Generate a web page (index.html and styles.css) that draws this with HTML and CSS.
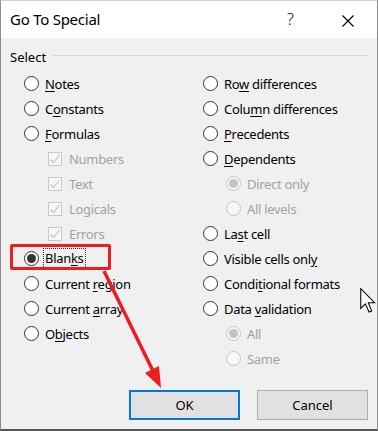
FILE: index.html
```html
<!DOCTYPE html>
<html lang="en">

<head>
    <meta charset="UTF-8">
    <meta name="viewport" content="width=device-width, initial-scale=1.0">
    <link rel="stylesheet" href="styles.css">
    <title>Go To Special</title>
</head>

<body>

    <div class="dialog">
        <div class="titlebar">
            <span class="title">Go To Special</span>
            <span class="help">?</span>
            <span class="close">
                <svg width="12" height="12" viewBox="0 0 12 12">
                    <path d="M0.5 0.5 L11.5 11.5 M11.5 0.5 L0.5 11.5" stroke="#000" stroke-width="1.1" fill="none"/>
                </svg>
            </span>
        </div>

        <div class="content">
            <div class="group-head">
                <span>Select</span>
                <span class="rule"></span>
            </div>

            <div class="options">
                <div class="col">
                    <div class="row"><span class="radio"></span><span><u>N</u>otes</span></div>
                    <div class="row"><span class="radio"></span><span>C<u>o</u>nstants</span></div>
                    <div class="row"><span class="radio"></span><span><u>F</u>ormulas</span></div>
                    <div class="row sub disabled"><span class="check"><svg width="12" height="12" viewBox="0 0 12 12"><path d="M1.5 6.5 L4.5 9.5 L10.5 2" stroke="#c4c4c4" stroke-width="1.2" fill="none"/></svg></span><span>Numbers</span></div>
                    <div class="row sub disabled"><span class="check"><svg width="12" height="12" viewBox="0 0 12 12"><path d="M1.5 6.5 L4.5 9.5 L10.5 2" stroke="#c4c4c4" stroke-width="1.2" fill="none"/></svg></span><span>Text</span></div>
                    <div class="row sub disabled"><span class="check"><svg width="12" height="12" viewBox="0 0 12 12"><path d="M1.5 6.5 L4.5 9.5 L10.5 2" stroke="#c4c4c4" stroke-width="1.2" fill="none"/></svg></span><span>Logicals</span></div>
                    <div class="row sub disabled"><span class="check"><svg width="12" height="12" viewBox="0 0 12 12"><path d="M1.5 6.5 L4.5 9.5 L10.5 2" stroke="#c4c4c4" stroke-width="1.2" fill="none"/></svg></span><span>Errors</span></div>
                    <div class="row marked">
                        <span class="highlight"></span>
                        <span class="radio checked"></span><span class="focus">Blan<u>k</u>s</span>
                    </div>
                    <div class="row"><span class="radio"></span><span>Current <u>r</u>egion</span></div>
                    <div class="row"><span class="radio"></span><span>Current <u>a</u>rray</span></div>
                    <div class="row"><span class="radio"></span><span>O<u>b</u>jects</span></div>
                </div>

                <div class="col">
                    <div class="row"><span class="radio"></span><span>Ro<u>w</u> differences</span></div>
                    <div class="row"><span class="radio"></span><span>Colu<u>m</u>n differences</span></div>
                    <div class="row"><span class="radio"></span><span><u>P</u>recedents</span></div>
                    <div class="row"><span class="radio"></span><span><u>D</u>ependents</span></div>
                    <div class="row indent disabled"><span class="radio checked"></span><span>Direct only</span></div>
                    <div class="row indent disabled"><span class="radio"></span><span>All levels</span></div>
                    <div class="row"><span class="radio"></span><span>La<u>s</u>t cell</span></div>
                    <div class="row"><span class="radio"></span><span>Visible cells onl<u>y</u></span></div>
                    <div class="row"><span class="radio"></span><span>Condi<u>t</u>ional formats</span></div>
                    <div class="row"><span class="radio"></span><span>Data <u>v</u>alidation</span></div>
                    <div class="row indent disabled"><span class="radio checked"></span><span>All</span></div>
                    <div class="row indent disabled"><span class="radio"></span><span>Same</span></div>
                </div>
            </div>

            <div class="buttons">
                <button class="default">OK</button>
                <button>Cancel</button>
            </div>
        </div>

        <!-- annotation arrow drawn over the dialog -->
        <svg class="arrow" width="378" height="431" viewBox="0 0 378 431">
            <line x1="104" y1="271" x2="153" y2="371" stroke="#ee1c1c" stroke-width="3.5"/>
            <polygon points="161,388 145,373 159,366" fill="#ee1c1c"/>
        </svg>

        <svg class="cursor" width="16" height="25" viewBox="0 0 12 19">
            <path d="M0.5 0.5 L0.5 15.5 L4 12 L6.8 18.3 L8.8 17.4 L6.2 11.2 L11 11.2 Z" fill="#fff" stroke="#000" stroke-width="0.8" stroke-linejoin="miter"/>
        </svg>
    </div>

</body>

</html>
```

FILE: styles.css
```css
body {
    margin: 0;
    padding: 0;
    font-family: 'Noto Sans', 'Open Sans', sans-serif;
    font-size: 13px;
    color: #000;
    background: #f0f0f0;
}

.dialog {
    position: relative;
    width: 378px;
    height: 431px;
    box-sizing: border-box;
    border-left: 1px solid #8c8c8c;
    border-right: 1px solid #8c8c8c;
    border-top: 1px solid #d0d0d0;
    border-bottom: 2px solid #555;
    background: #f0f0f0;
    overflow: hidden;
}

.titlebar {
    height: 37px;
    background: #fff;
    display: flex;
    align-items: center;
    padding-left: 9px;
}

.title {
    font-size: 15px;
    letter-spacing: -0.25px;
    flex: 1;
    margin-top: -1px;
}

.help {
    font-size: 16px;
    font-weight: 300;
    width: 20px;
    margin-right: 35px;
    margin-top: -1px;
}

.close {
    width: 12px;
    height: 12px;
    margin-right: 23px;
    margin-top: -1px;
}

.content {
    padding: 9px 9px 0 9px;
}

.group-head {
    display: flex;
    align-items: center;
    height: 20px;
}

.rule {
    flex: 1;
    height: 1px;
    background: #d5d5d5;
    margin-left: 7px;
    margin-bottom: 4px;
}

.options {
    display: grid;
    grid-template-columns: 179px 1fr;
    padding-left: 14px;
    margin-top: 4px;
}

.row {
    position: relative;
    display: flex;
    align-items: center;
    gap: 6px;
    height: 25px;
    letter-spacing: -0.3px;
}

.row u {
    text-underline-offset: 2px;
}

.row.sub {
    padding-left: 24px;
    gap: 7px;
}

.row.indent {
    padding-left: 23px;
}

.disabled {
    color: #a2a2a2;
}

.radio {
    width: 15px;
    height: 15px;
    box-sizing: border-box;
    border: 1px solid #333;
    border-radius: 50%;
    background: #fff;
    display: flex;
    align-items: center;
    justify-content: center;
    flex-shrink: 0;
}

.radio.checked::after {
    content: "";
    width: 9px;
    height: 9px;
    border-radius: 50%;
    background: #333;
}

.disabled .radio {
    border-color: #c4c4c4;
    background: #f7f7f7;
}

.disabled .radio.checked::after {
    background: #c4c4c4;
}

.check {
    width: 14px;
    height: 14px;
    box-sizing: border-box;
    border: 1px solid #cacaca;
    background: #f7f7f7;
    display: flex;
    align-items: center;
    justify-content: center;
}

.focus {
    outline: 1px dotted #333;
    outline-offset: 1px;
    line-height: 17px;
}

.highlight {
    position: absolute;
    left: -14px;
    top: -2px;
    width: 101px;
    height: 26px;
    box-sizing: border-box;
    border: 3px solid #ee1c1c;
    border-radius: 2px;
}

.buttons {
    display: flex;
    justify-content: flex-end;
    gap: 17px;
    margin-top: 19px;
}

button {
    width: 111px;
    height: 30px;
    font-family: inherit;
    font-size: 13px;
    color: #000;
    background: #e1e1e1;
    border: 1px solid #adadad;
    border-radius: 0;
    padding: 0;
}

button.default {
    border: 2px solid #0078d7;
}

.arrow {
    position: absolute;
    left: -1px;
    top: -1px;
    pointer-events: none;
}

.cursor {
    position: absolute;
    left: 359px;
    top: 287px;
    pointer-events: none;
}
```
